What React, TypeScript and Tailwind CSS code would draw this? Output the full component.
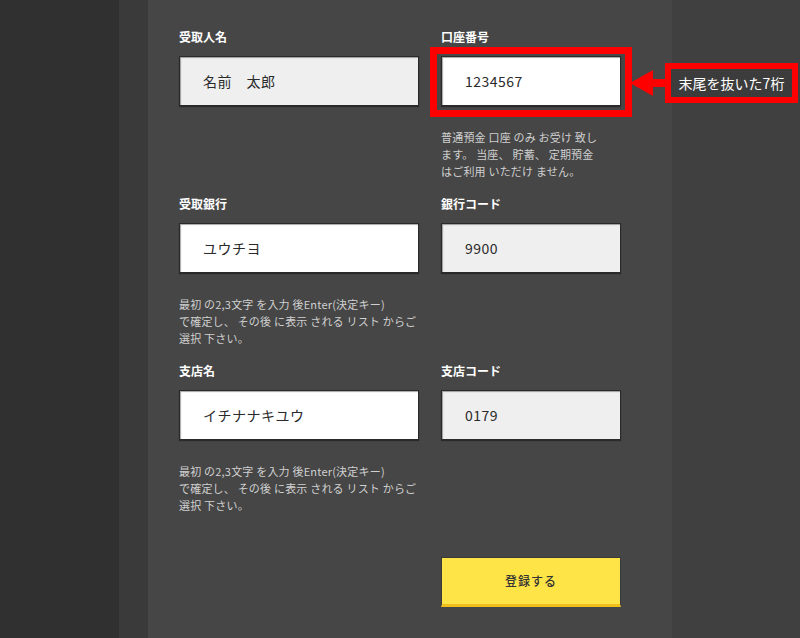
import type { ReactNode } from "react";

// Field definitions, row by row
type Field = {
  label: string;
  value: string;
  readOnly?: boolean;
  note?: ReactNode;
};

const searchNote = (
  <>
    最初 の2,3文字 を入力 後Enter(決定キー)
    <br />
    で確定し、 その後 に表示 される リスト からご
    <br />
    選択 下さい。
  </>
);

const rows: [Field, Field][] = [
  [
    { label: "受取人名", value: "名前　太郎", readOnly: true },
    {
      label: "口座番号",
      value: "1234567",
      note: (
        <>
          普通預金 口座 のみ お受け 致し
          <br />
          ます。 当座、 貯蓄、 定期預金
          <br />
          はご利用 いただけ ません。
        </>
      ),
    },
  ],
  [
    { label: "受取銀行", value: "ユウチヨ", note: searchNote },
    { label: "銀行コード", value: "9900", readOnly: true },
  ],
  [
    { label: "支店名", value: "イチナナキユウ", note: searchNote },
    { label: "支店コード", value: "0179", readOnly: true },
  ],
];

const FieldCell = ({ field }: { field: Field }) => (
  <div className="flex flex-col">
    <div className="h-[18px] leading-[18px] mb-[10px] text-[12px] font-bold text-white">
      {field.label}
    </div>
    <div
      className={`h-[50px] flex items-center pl-[23px] border border-[#2a2a2a] shadow-[inset_1px_1px_1px_rgba(0,0,0,0.35),0_1px_1px_rgba(0,0,0,0.4)] text-[14px] tracking-[0.5px] text-[#2a2a2a] ${
        field.readOnly ? "bg-[#efefef]" : "bg-white"
      }`}
    >
      {field.value}
    </div>
    {field.note && (
      <p className="mt-[23px] text-[11px] leading-[17px] tracking-[0.2px] text-[#d0d0d0]">
        {field.note}
      </p>
    )}
  </div>
);

const App = () => {
  return (
    <div
      className="relative flex w-[800px] h-[638px] overflow-hidden bg-[#404040]"
      style={{ fontFamily: '"Noto Sans CJK JP", "Noto Sans", sans-serif' }}
    >
      {/* Side columns */}
      <div className="w-[119px] shrink-0 bg-[#303030]" />
      <div className="w-[29px] shrink-0 bg-[#3a3a3a]" />

      {/* Form panel */}
      <div className="w-[524px] shrink-0 bg-[#464646] pl-[31px] pt-[28px]">
        {rows.map((row, i) => (
          <div
            key={i}
            className="grid grid-cols-[240px_180px] gap-x-[22px] h-[167px] items-start"
          >
            <FieldCell field={row[0]} />
            <FieldCell field={row[1]} />
          </div>
        ))}

        <div className="grid grid-cols-[240px_180px] gap-x-[22px] mt-[28px]">
          <div />
          <button
            type="button"
            className="h-[50px] bg-[#ffe447] border border-[#3a3a3a] border-b-[3px] border-b-[#f0bf1c] text-[12px] font-medium text-[#333] tracking-[1px]"
          >
            登録する
          </button>
        </div>
      </div>

      <div className="flex-1" />

      {/* Annotation: red frame, arrow and caption */}
      <div className="absolute left-[430px] top-[47px] w-[202px] h-[70px] border-[7px] border-[#ff0000]" />
      <svg
        className="absolute left-[629px] top-[69px]"
        width="40"
        height="28"
        viewBox="0 0 40 28"
      >
        <polygon points="1,14 24,1 24,27" fill="#ff0000" />
        <rect x="23" y="10" width="17" height="8" fill="#ff0000" />
      </svg>
      <div className="absolute left-[665px] top-[63px] w-[133px] h-[40px] border-[6px] border-[#ff0000] bg-[#3c3c3c] flex items-center justify-center text-[14px] text-white">
        末尾を抜いた7桁
      </div>
    </div>
  );
};

export default App;
